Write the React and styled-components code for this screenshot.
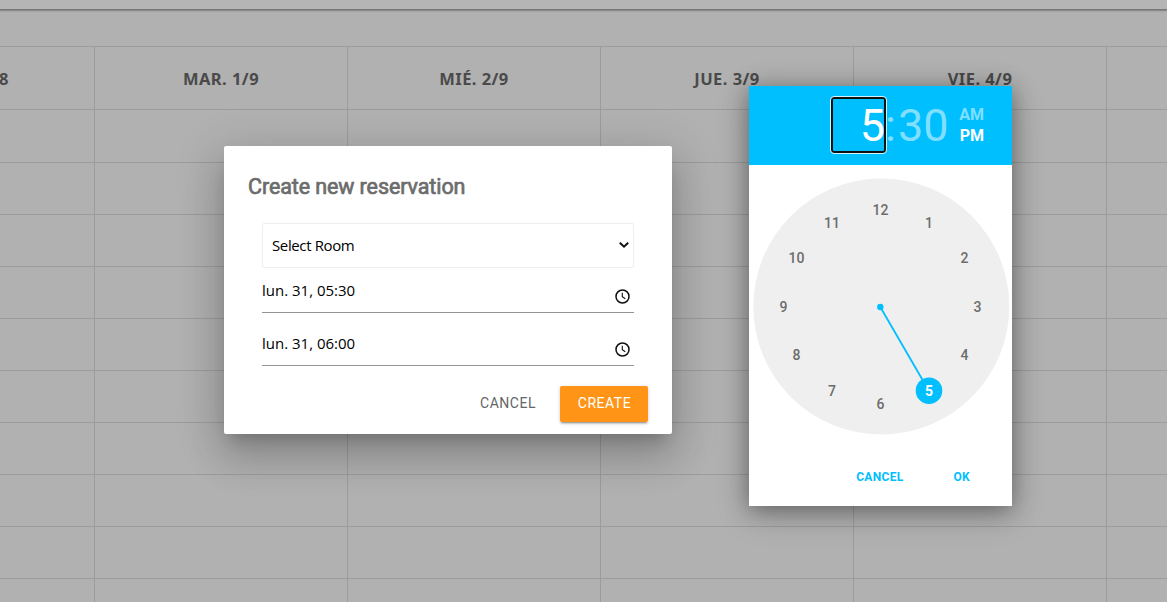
import React from 'react';
import styled, { createGlobalStyle } from 'styled-components';

const GlobalStyle = createGlobalStyle`
  * { box-sizing: border-box; }
  html, body { margin: 0; padding: 0; overflow: hidden; }
  body { font-family: 'Noto Sans', 'Open Sans', sans-serif; }
  button { font: inherit; border: 0; padding: 0; background: none; cursor: pointer; }
`;

const Page = styled.div`
  position: relative;
  width: 1167px;
  height: 602px;
  overflow: hidden;
  background: #b1b1b1;
`;

const AppBar = styled.header`
  position: relative;
  height: 10px;
  background: #b5b5b5;
  border-bottom: 1px solid #777;
  box-shadow: 0 1px 1px rgba(0, 0, 0, 0.18), 0 2px 2px rgba(0, 0, 0, 0.05);
`;

const Calendar = styled.main`
  display: grid;
  grid-template-columns: 95px repeat(4, 253px) 253px;
  grid-template-rows: 64px 53px;
  grid-auto-rows: 52px;
  margin-top: 36px;
  border-top: 1px solid #9c9c9c;
`;

const DayHeading = styled.div`
  display: flex;
  align-items: center;
  justify-content: center;
  height: 63px;
  padding-top: 1px;
  border-right: 1px solid #9c9c9c;
  border-bottom: 1px solid #9c9c9c;
  color: #4a4a4a;
  font-weight: 700;
  font-size: 16.5px;
  line-height: 22px;
  letter-spacing: 0.45px;
`;

const EdgeHeading = styled(DayHeading)`
  justify-content: flex-end;
  padding-right: 85px;
`;

const Slot = styled.div`
  margin-top: -1px;
  margin-bottom: 1px;
  border-right: 1px solid #9c9c9c;
  border-bottom: 1px solid #9c9c9c;
`;

const Dialog = styled.section`
  position: absolute;
  left: 224px;
  top: 146px;
  width: 448px;
  height: 288px;
  padding: 24px;
  border-radius: 2px;
  background: #fff;
  box-shadow: 0 11px 15px -7px rgba(0, 0, 0, 0.2),
    0 24px 38px 3px rgba(0, 0, 0, 0.14), 0 9px 46px 8px rgba(0, 0, 0, 0.12);
`;

const DialogTitle = styled.h2`
  margin: 0;
  height: 32px;
  font: 400 21.5px/33px Roboto, sans-serif;
  -webkit-text-stroke: 0.7px #6c6c6c;
  letter-spacing: -0.1px;
  color: #6c6c6c;
`;

const Fields = styled.div`
  display: flex;
  flex-direction: column;
  margin: 21px 14px 0;
`;

const RoomSelect = styled.div`
  display: flex;
  align-items: center;
  justify-content: space-between;
  height: 45px;
  padding: 0 4px 0 9px;
  border: 1px solid #eee;
  border-radius: 2px;
  color: #000;
  font: 400 15px 'Open Sans', sans-serif;
  letter-spacing: -0.38px;
  span { padding-bottom: 2px; }
  svg { margin-top: -1px; }
`;

const TimeField = styled.div`
  display: flex;
  justify-content: space-between;
  height: ${(p) => p.$height};
  padding-top: ${(p) => p.$top};
  padding-right: 4px;
  border-bottom: 1px solid #949494;
  color: #000;
  font: 400 15px/20px 'Open Sans', sans-serif;
  svg { margin-top: 9px; }
`;

const DialogActions = styled.div`
  display: flex;
  justify-content: flex-end;
  gap: 8px;
  margin-top: 20px;
`;

const ActionButton = styled.button`
  && {
    width: ${(p) => (p.$primary ? '88px' : '89px')};
    height: 36px;
    padding: 0 0 2px 1px;
    border-radius: 2px;
    color: ${(p) => (p.$primary ? '#fff' : '#666')};
    background: ${(p) => (p.$primary ? '#ff9416' : 'transparent')};
    box-shadow: ${(p) =>
      p.$primary
        ? '0 3px 1px -2px rgba(0,0,0,.2), 0 2px 2px rgba(0,0,0,.14), 0 1px 5px rgba(0,0,0,.12)'
        : 'none'};
    font: 400 14px/34px Roboto, sans-serif;
    letter-spacing: 0.5px;
  }
`;

const Picker = styled.section`
  position: absolute;
  left: 749px;
  top: 86px;
  width: 263px;
  height: 420px;
  background: #fff;
  font-family: Roboto, sans-serif;
  box-shadow: 0 4px 22px rgba(0, 0, 0, 0.38), 0 8px 36px rgba(0, 0, 0, 0.14);
`;

const PickerHeader = styled.header`
  display: flex;
  height: 79px;
  padding: 10px 28px 0 81px;
  background: #00bfff;
`;

const HourButton = styled.button`
  && {
    width: 57px;
    height: 58px;
    border: 1px solid #d4f4ff;
    border-radius: 4px;
    box-shadow: inset 0 0 0 2px #101010;
    color: #fff;
    text-align: right;
    padding: 1px 1px 0 0;
    font: 400 45px/55px Roboto, sans-serif;
  }
`;

const Minutes = styled.span`
  width: 61px;
  padding-top: 1px;
  color: #80dfff;
  font-size: 45px;
  line-height: 57px;
  white-space: nowrap;
`;

const Colon = styled.span`
  display: inline-block;
  width: 13px;
  margin-left: -2px;
`;

const Meridiem = styled.div`
  display: flex;
  flex-direction: column;
  align-items: flex-end;
  margin: 8px 0 0 auto;
  width: 34px;
  font-size: 16px;
  line-height: 21px;
`;

const Period = styled.span`
  color: ${(p) => (p.$active ? '#fff' : '#80dfff')};
  font-weight: 700;
`;

const Dial = styled.svg`
  display: block;
  width: 263px;
  height: 282px;
  font: 500 14px Roboto, sans-serif;
`;

const PickerActions = styled.footer`
  display: flex;
  justify-content: flex-end;
  gap: 50px;
  padding: 20px 42px 0 0;
`;

const PickerButton = styled.button`
  && {
    height: 20px;
    color: #00bfff;
    font: 700 12px/20px Roboto, sans-serif;
    letter-spacing: 0.3px;
  }
`;

const days = ['MAR. 1/9', 'MIÉ. 2/9', 'JUE. 3/9', 'VIE. 4/9'];

function ClockIcon() {
  return (
    <svg width="15" height="15" viewBox="0 0 15 15" fill="none" stroke="#111">
      <circle cx="7.5" cy="7.5" r="6.5" strokeWidth="1.5" />
      <path d="M7.3 3.8v4l3 1.9" strokeWidth="1.1" />
    </svg>
  );
}

function ClockDial() {
  return (
    <Dial viewBox="0 0 263 282">
      <circle cx="132.3" cy="141.5" r="128" fill="#efefef" />
      <path d="M131.3 142L180 226" stroke="#00bfff" strokeWidth="1.8" />
      <circle cx="131.3" cy="142" r="3.2" fill="#00bfff" />
      <circle cx="180" cy="225.7" r="13.3" fill="#00bfff" />
      {Array.from({ length: 12 }, (_, i) => {
        const hour = i + 1;
        const angle = (hour * Math.PI) / 6;
        return (
          <text
            key={hour}
            x={131.5 + 97 * Math.sin(angle)}
            y={146.6 - 97 * Math.cos(angle)}
            textAnchor="middle"
            fill={hour === 5 ? '#fff' : '#6c6c6c'}
            fontWeight={hour === 5 ? 700 : 500}
          >
            {hour}
          </text>
        );
      })}
    </Dial>
  );
}

export default function App() {
  return (
    <Page>
      <GlobalStyle />
      <AppBar />
      <Calendar>
        <EdgeHeading>8</EdgeHeading>
        {days.map((day) => (
          <DayHeading key={day}>{day}</DayHeading>
        ))}
        <DayHeading />
        {Array.from({ length: 60 }, (_, i) => <Slot key={i} />)}
      </Calendar>
      <Dialog>
        <DialogTitle>Create new reservation</DialogTitle>
        <Fields>
          <RoomSelect>
            <span>Select Room</span>
            <svg width="10" height="8" viewBox="0 0 10 8" fill="none" stroke="#111" strokeWidth="2">
              <path d="M0.8 1.7L5 5.7L9.2 1.7" />
            </svg>
          </RoomSelect>
          <TimeField $height="45px" $top="12px">
            <span>lun. 31, 05:30</span>
            <ClockIcon />
          </TimeField>
          <TimeField $height="53px" $top="20px">
            <span>lun. 31, 06:00</span>
            <ClockIcon />
          </TimeField>
        </Fields>
        <DialogActions>
          <ActionButton>CANCEL</ActionButton>
          <ActionButton $primary>CREATE</ActionButton>
        </DialogActions>
      </Dialog>
      <Picker>
        <PickerHeader>
          <HourButton>5</HourButton>
          <Minutes><Colon>:</Colon>30</Minutes>
          <Meridiem>
            <Period>AM</Period>
            <Period $active>PM</Period>
          </Meridiem>
        </PickerHeader>
        <ClockDial />
        <PickerActions>
          <PickerButton>CANCEL</PickerButton>
          <PickerButton>OK</PickerButton>
        </PickerActions>
      </Picker>
    </Page>
  );
}
